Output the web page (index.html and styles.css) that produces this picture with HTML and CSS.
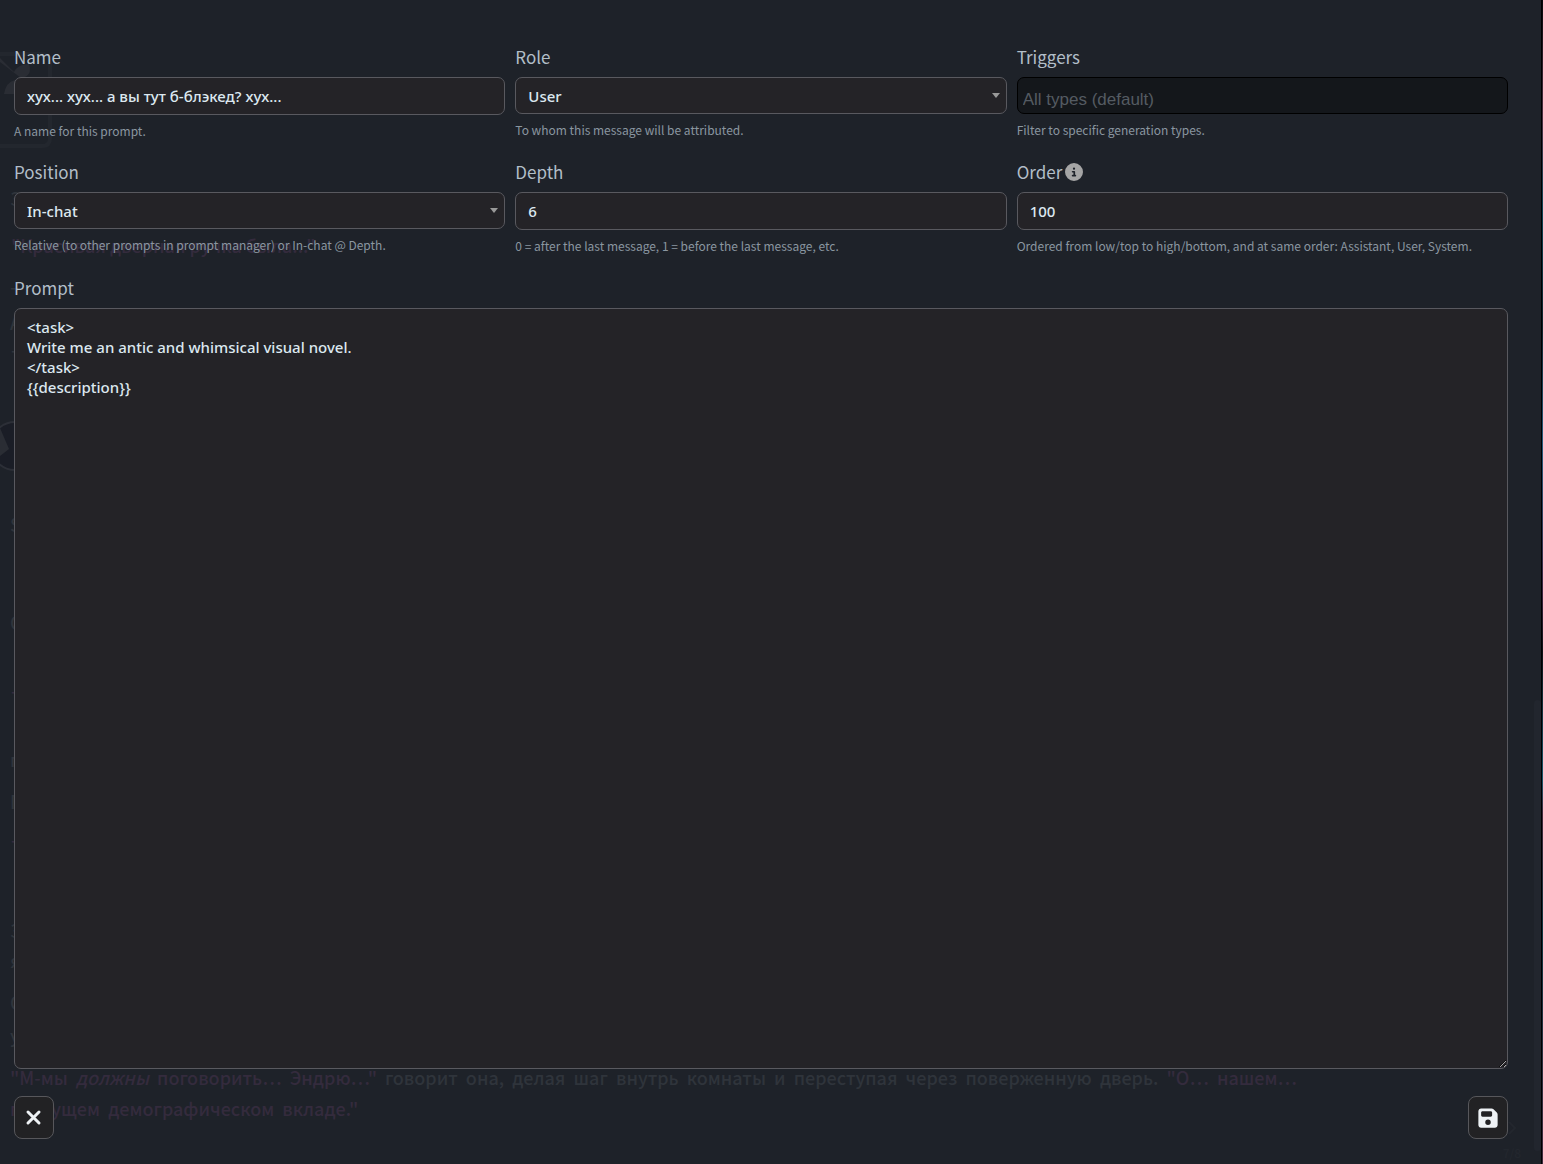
FILE: index.html
```html
<!DOCTYPE html>
<html lang="en">

<head>
  <meta charset="UTF-8" />
  <meta name="viewport" content="width=device-width, initial-scale=1.0" />
  <title>Prompt Edit</title>
  <link rel="stylesheet" href="styles.css">
</head>

<body>
  <div class="popup">
    <!-- chat showing faintly through the popup -->
    <div class="backdrop" aria-hidden="true">
      <svg class="chat-side" width="320" height="1060" viewBox="0 0 320 1060">
        <path class="card" d="M0 54h42q8 0 8 8v76q0 8-8 8H0" />
        <path class="shape" d="M0 58l14 14q4-8 15-8q4 12-8 14L0 62zM4 94q2-12 11-14v14z" />
        <circle class="avatar" cx="15" cy="446" r="24" />
        <path class="shape" d="M0 428l9 21l-9 7z" />
        <text x="10" y="206">З</text>
        <text class="quote" x="11" y="253">"Красивая дверная ручка была..."</text>
        <text x="10" y="294">-</text>
        <text x="10" y="330">А</text>
        <text x="11" y="357">-</text>
        <text x="10" y="532">S</text>
        <text x="10" y="630">О</text>
        <text class="quote" x="11" y="698">-</text>
        <text x="10" y="767">п</text>
        <text x="10" y="809">П</text>
        <text class="quote" x="11" y="847">-</text>
        <text x="10" y="938">З</text>
        <text x="10" y="968">я</text>
        <text x="10" y="1010">О</text>
        <text x="10" y="1043">у</text>
      </svg>
      <p class="chat-message"><q>"М-мы  <em>должны</em>  поговорить…  Эндрю…"</q>  говорит  она,  делая  шаг  внутрь  комнаты  и  переступая  через  поверженную  дверь.  <q>"О…  нашем…
грядущем  демографическом  вкладе."</q></p>
      <div class="chat-nav">
        <svg width="10" height="16" viewBox="0 0 10 16">
          <path d="M2 2l6 6l-6 6" />
        </svg>
        <span>7/8</span>
      </div>
      <div class="chat-scroll"></div>
    </div>

    <form class="prompt-form">
      <div class="fields">
        <div class="field">
          <label for="name">Name</label>
          <input class="text-pole" id="name" type="text" value="хух... хух... а вы тут б-блэкед? хух...">
          <small>A name for this prompt.</small>
        </div>
        <div class="field">
          <label for="role">Role</label>
          <select class="text-pole" id="role">
            <option>System</option>
            <option selected>User</option>
            <option>Assistant</option>
          </select>
          <small>To whom this message will be attributed.</small>
        </div>
        <div class="field">
          <label for="triggers">Triggers</label>
          <input class="text-pole triggers" id="triggers" type="text" placeholder="All types (default)">
          <small>Filter to specific generation types.</small>
        </div>
        <div class="field">
          <label for="position">Position</label>
          <select class="text-pole" id="position">
            <option>Relative</option>
            <option selected>In-chat</option>
          </select>
          <small>Relative (to other prompts in prompt manager) or In-chat @ Depth.</small>
        </div>
        <div class="field">
          <label for="depth">Depth</label>
          <input class="text-pole number" id="depth" type="number" value="6">
          <small>0 = after the last message, 1 = before the last message, etc.</small>
        </div>
        <div class="field">
          <label for="order">Order
            <svg class="info" viewBox="0 0 512 512">
              <path d="M256 512A256 256 0 1 0 256 0a256 256 0 1 0 0 512zM216 336h24V272H216c-13 0-24-11-24-24s11-24 24-24h48c13 0 24 11 24 24v88h8c13 0 24 11 24 24s-11 24-24 24H216c-13 0-24-11-24-24s11-24 24-24zm40-208a32 32 0 1 1 0 64 32 32 0 1 1 0-64z" />
            </svg>
          </label>
          <input class="text-pole number" id="order" type="number" value="100">
          <small>Ordered from low/top to high/bottom, and at same order: Assistant, User, System.</small>
        </div>
      </div>

      <div class="field prompt">
        <label for="prompt">Prompt</label>
        <textarea class="text-pole" id="prompt" spellcheck="false">&lt;task&gt;
Write me an antic and whimsical visual novel.
&lt;/task&gt;
{{description}}</textarea>
      </div>

      <div class="buttons">
        <button type="button" class="menu-button" aria-label="Close">
          <svg width="20" height="20" viewBox="0 0 20 20">
            <path class="cross" d="M4 4l11 11M15 4L4 15" />
          </svg>
        </button>
        <button type="submit" class="menu-button" aria-label="Save">
          <svg width="22" height="22" viewBox="0 0 448 512">
            <path fill-rule="evenodd" d="M64 32C28.700 32 0 60.700 0 96V416c0 35.300 28.700 64 64 64H384c35.300 0 64-28.700 64-64V173.300c0-17-6.700-33.300-18.700-45.300L352 50.700C340 38.700 323.700 32 306.700 32H64zm0 96c0-17.700 14.300-32 32-32H288c17.700 0 32 14.300 32 32v64c0 17.700-14.300 32-32 32H96c-17.700 0-32-14.300-32-32V128zM224 288a64 64 0 1 1 0 128 64 64 0 1 1 0-128z" />
          </svg>
        </button>
      </div>
    </form>
  </div>
</body>

</html>
```
FILE: styles.css
```css
* {
  margin: 0;
  padding: 0;
  box-sizing: border-box;
}

body {
  font-family: "Noto Sans CJK SC", "Noto Sans", sans-serif;
  font-weight: 500;
  color: #b2bec8;
  background: linear-gradient(#07090d, #4a2f42 10%, #0d4254 18%, #10222c 28%, #245a7c 38%, #3a2440 51%, #0e1218 56%, #17546a 67%, #40283c 70%, #0d3440 80%, #402a3e);
}

.popup {
  position: relative;
  min-height: 100vh;
  margin-right: 1px;
  border-right: 1px solid #000;
  background-color: #1e2229;
  display: flex;
}

.backdrop {
  position: absolute;
  inset: 0;
  overflow: hidden;
  font-size: 18px;
  color: #2f343b;
}

.chat-side {
  display: block;
  fill: #2f343b;
}

.chat-side .quote {
  fill: #342b3d;
}

.chat-side .card {
  fill: none;
  stroke: #23272e;
  stroke-width: 4;
}

.chat-side .shape {
  fill: #2a2d34;
}

.chat-side .avatar {
  fill: #1a1d26;
  stroke: #2c2f37;
  stroke-width: 2;
}

.chat-message {
  position: absolute;
  left: 10px;
  bottom: 40px;
  line-height: 31px;
  white-space: pre;
}

.chat-message q {
  color: #342b3d;
  quotes: none;
}

.chat-nav {
  position: absolute;
  right: 20px;
  bottom: 2px;
  display: flex;
  flex-direction: column;
  align-items: center;
  gap: 8px;
  font-size: 12px;
  line-height: 18px;
  color: #23272e;
}

.chat-nav path {
  fill: none;
  stroke: #23272e;
  stroke-width: 2;
}

.chat-scroll {
  position: absolute;
  right: 0;
  top: 700px;
  bottom: 13px;
  width: 7px;
  border-radius: 4px;
  background-color: #22262e;
}

.prompt-form {
  position: relative;
  flex: 1;
  display: flex;
  flex-direction: column;
  padding: 45px 33px 25px 14px;
}

.fields {
  display: grid;
  grid-template-columns: repeat(3, 1fr);
  gap: 19px 10px;
  margin-bottom: 20px;
}

.field {
  min-width: 0;
  display: flex;
  flex-direction: column;
}

.field label {
  display: flex;
  align-items: center;
  gap: 3px;
  font-size: 17px;
  font-weight: 400;
  line-height: 24px;
  margin-bottom: 8px;
}

.field small {
  font-size: 12px;
  font-weight: 400;
  line-height: 20px;
  margin-top: 6px;
  color: #8a96a0;
}

.info {
  width: 18px;
  height: 18px;
  fill: #a5a5a5;
}

.text-pole {
  width: 100%;
  height: 38px;
  padding: 0 12px;
  font-family: "Noto Sans", sans-serif;
  font-size: 15px;
  font-weight: 500;
  line-height: 20px;
  color: #dce8f0;
  background-color: #242327;
  border: 1px solid #59595f;
  border-radius: 7px;
  outline: none;
}

select.text-pole {
  height: 37px;
  appearance: none;
  background-image: url("data:image/svg+xml,%3Csvg xmlns='http://www.w3.org/2000/svg' width='8' height='5'%3E%3Cpath d='M0 0h8L4 5z' fill='%23999'/%3E%3C/svg%3E");
  background-repeat: no-repeat;
  background-position: right 6px center;
}

.text-pole.number {
  appearance: textfield;
}

.text-pole.triggers {
  height: 37px;
  padding: 8px 5px 0;
  font-family: "Liberation Sans", Arial, sans-serif;
  font-size: 17px;
  font-weight: 400;
  background-color: #14171b;
  border-color: #000;
}

.triggers::placeholder {
  color: #545b62;
}

.prompt {
  flex: 1;
}

.prompt .text-pole {
  flex: 1;
  padding: 8px 12px;
  resize: vertical;
}

.buttons {
  display: flex;
  justify-content: space-between;
  margin-top: 27px;
}

.menu-button {
  display: flex;
  align-items: center;
  justify-content: center;
  width: 40px;
  height: 43px;
  background-color: #222224;
  border: 1px solid #57575b;
  border-radius: 8px;
  cursor: pointer;
}

.menu-button svg {
  fill: #eef2f5;
}

.menu-button .cross {
  stroke: #eef2f5;
  stroke-width: 3;
  stroke-linecap: round;
}
```
